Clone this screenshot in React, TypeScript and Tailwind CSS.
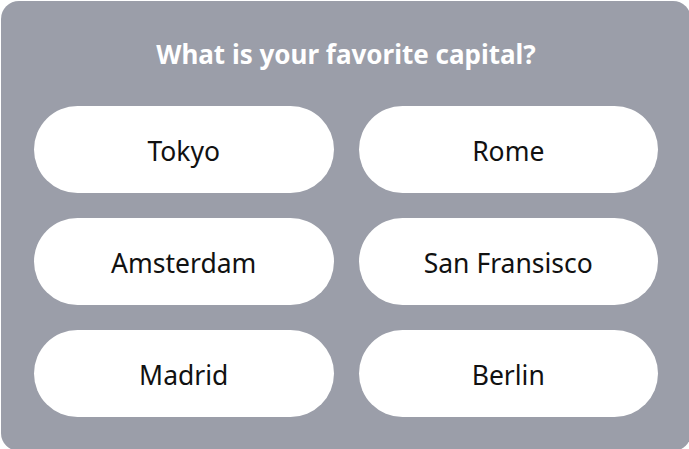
import React from 'react'

const capitals = ['Tokyo', 'Rome', 'Amsterdam', 'San Fransisco', 'Madrid', 'Berlin']

const ChoiceButton: React.FC<{ label: string }> = ({ label }) => (
  <button className="h-[87px] rounded-full bg-white pt-[4px] text-[26.5px] font-normal text-[#111111]">
    {label}
  </button>
)

export default function App() {
  return (
    <div
      className="h-[449px] w-[689px] overflow-hidden bg-white pl-[1px] pt-[1px]"
      style={{ fontFamily: '"Noto Sans", "Open Sans", sans-serif' }}
    >
      <div className="h-[450px] w-[690px] rounded-[18px] bg-[#9b9ea9] px-[33px] pt-[37px]">
        <h1 className="mb-[36px] text-center text-[26px] font-bold leading-[32px] text-white">
          What is your favorite capital?
        </h1>
        <div className="grid grid-cols-2 gap-[25px]">
          {capitals.map((c) => (
            <ChoiceButton key={c} label={c} />
          ))}
        </div>
      </div>
    </div>
  )
}
